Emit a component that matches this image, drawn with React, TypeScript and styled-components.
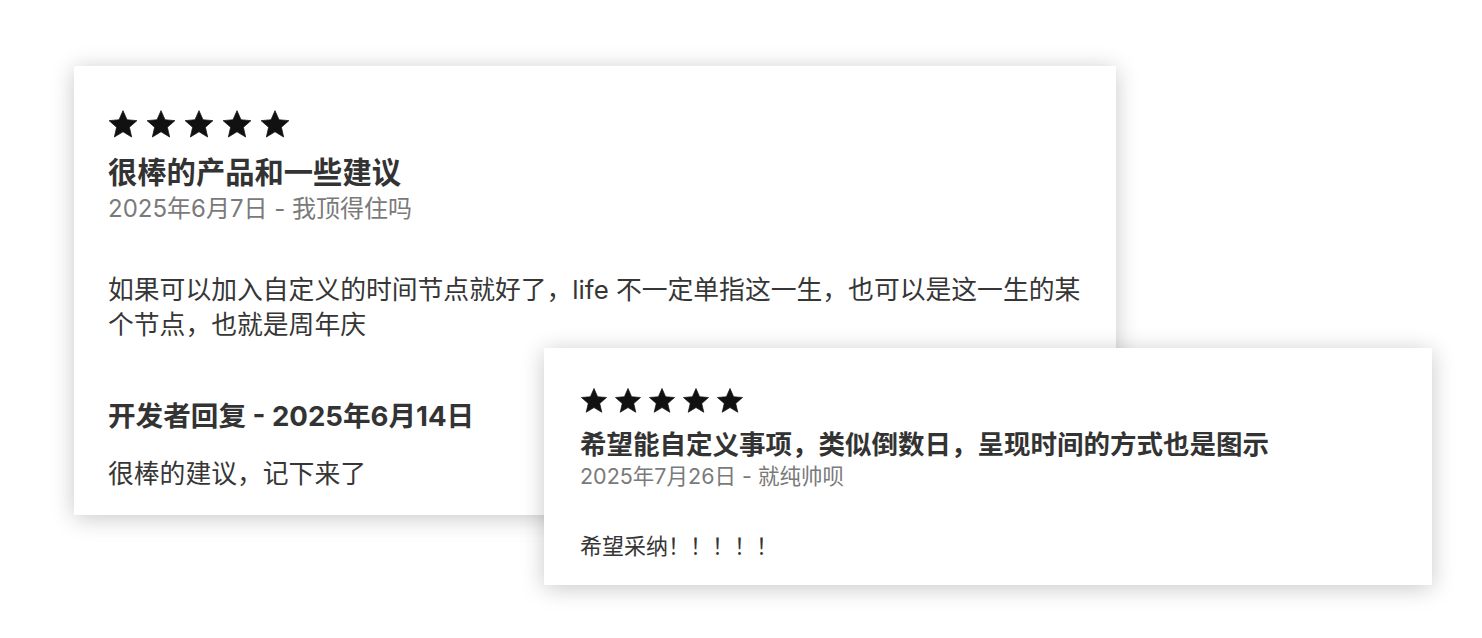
import styled, { createGlobalStyle } from "styled-components";

const GlobalStyle = createGlobalStyle`
  html, body {
    margin: 0;
    padding: 0;
    background: #ffffff;
  }
  body {
    font-family: Inter, "Noto Sans CJK SC", sans-serif;
    -webkit-font-smoothing: antialiased;
  }
`;

// the stage holds both review cards; the second card sits over the first
const Stage = styled.div`
  position: relative;
  width: 1482px;
  height: 638px;
  padding: 66px 0 0 74px;
  box-sizing: border-box;
  overflow: hidden;
`;

const Card = styled.section<{ $width: number; $pad: string }>`
  width: ${(p) => p.$width}px;
  box-sizing: border-box;
  padding: ${(p) => p.$pad};
  background: #ffffff;
  box-shadow: 0 3px 22px rgba(0, 0, 0, 0.22);
  display: flex;
  flex-direction: column;
`;

const FloatingCard = styled(Card)`
  position: absolute;
  left: 544px;
  top: 348px;
`;

const Stars = styled.div<{ $gap: number }>`
  display: flex;
  gap: ${(p) => p.$gap}px;
`;

const Title = styled.h2<{ $size: number; $lh: number; $mt: number }>`
  margin: ${(p) => p.$mt}px 0 0;
  font-size: ${(p) => p.$size}px;
  line-height: ${(p) => p.$lh}px;
  font-weight: 700;
  color: #333333;
`;

const Meta = styled.div<{ $size: number; $lh: number }>`
  font-size: ${(p) => p.$size}px;
  line-height: ${(p) => p.$lh}px;
  color: #7a7a7a;
`;

const Body = styled.p<{ $size: number; $lh: number; $mt: number }>`
  margin: ${(p) => p.$mt}px 0 0;
  font-size: ${(p) => p.$size}px;
  line-height: ${(p) => p.$lh}px;
  color: #363636;
`;

const ReplyHead = styled.h3`
  margin: 54px 0 0;
  font-size: 27.6px;
  line-height: 40px;
  font-weight: 700;
  color: #333333;
`;

const Star = ({ w, h }: { w: number; h: number }) => (
  <svg width={w} height={h} viewBox="0 0 24 23" aria-hidden>
    <path
      d="M12 0.4l3.2 7.3 7.9 0.7-6 5.3 1.8 7.8L12 17.3l-6.9 4.2 1.8-7.8-6-5.3 7.9-0.7z"
      fill="#111111"
      stroke="#111111"
      strokeWidth="0.6"
      strokeLinejoin="round"
    />
  </svg>
);

const Rating = ({ w, h, gap }: { w: number; h: number; gap: number }) => (
  <Stars $gap={gap}>
    {[0, 1, 2, 3, 4].map((i) => (
      <Star key={i} w={w} h={h} />
    ))}
  </Stars>
);

const App = () => {
  return (
    <>
      <GlobalStyle />
      <Stage>
        <Card $width={1042} $pad="44px 18px 23px 34px">
          <Rating w={30} h={29} gap={8} />
          <Title $size={29.3} $lh={40} $mt={14}>
            很棒的产品和一些建议
          </Title>
          <Meta $size={24} $lh={32}>
            2025年6月7日 - 我顶得住吗
          </Meta>
          <Body $size={25.8} $lh={35} $mt={47}>
            如果可以加入自定义的时间节点就好了，life 不一定单指这一生，也可以是这一生的某个节点，也就是周年庆
          </Body>
          <ReplyHead>开发者回复 - 2025年6月14日</ReplyHead>
          <Body $size={25.8} $lh={36} $mt={20}>
            很棒的建议，记下来了
          </Body>
        </Card>

        <FloatingCard $width={888} $pad="40px 30px 23px 36px">
          <Rating w={28} h={26} gap={6} />
          <Title $size={26.5} $lh={36} $mt={12}>
            希望能自定义事项，类似倒数日，呈现时间的方式也是图示
          </Title>
          <Meta $size={21.5} $lh={28}>
            2025年7月26日 - 就纯帅呗
          </Meta>
          <Body $size={22} $lh={32} $mt={40}>
            希望采纳！！！！！
          </Body>
        </FloatingCard>
      </Stage>
    </>
  );
};

export default App;
